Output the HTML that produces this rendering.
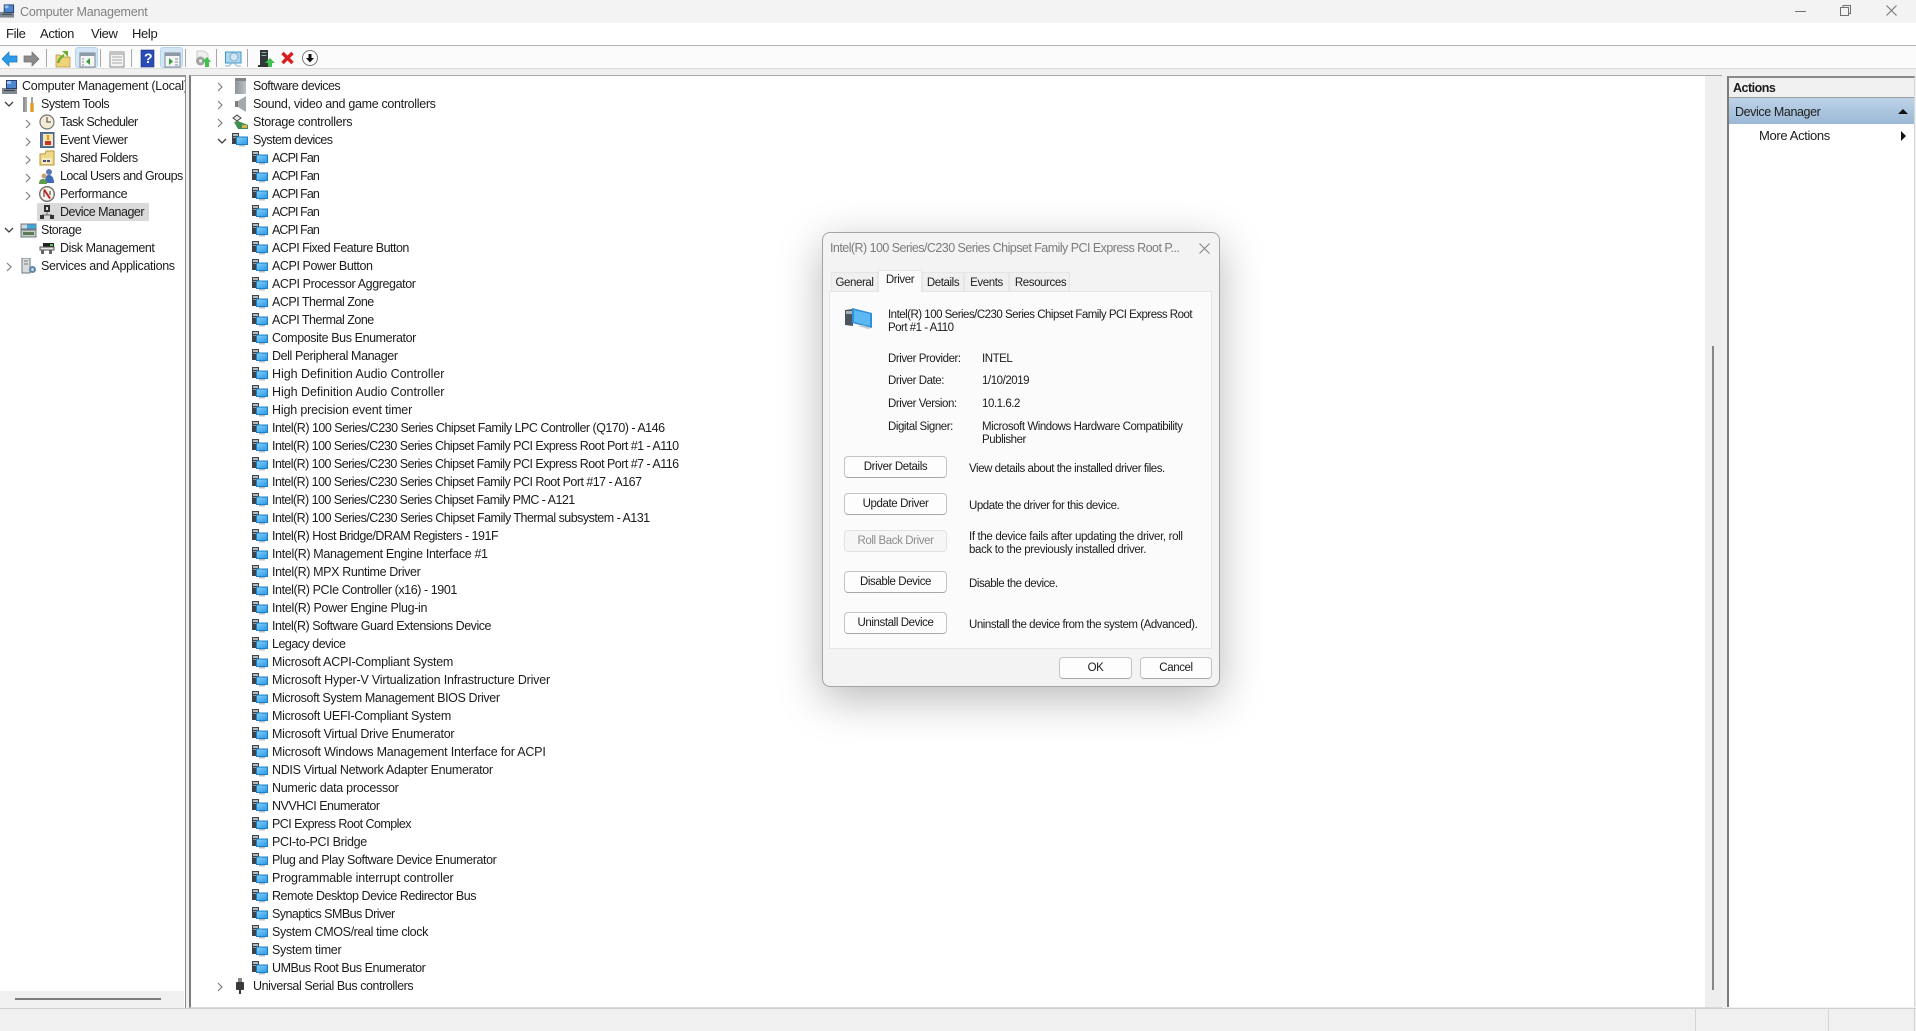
<!DOCTYPE html>
<html><head><meta charset="utf-8"><title>Computer Management</title>
<style>
*{box-sizing:border-box}
html,body{margin:0;padding:0;width:1916px;height:1031px;overflow:hidden;background:#f0f0f0;font-family:"Liberation Sans",sans-serif;font-size:12.5px;letter-spacing:-.5px;color:#1c1c1c}
.a{position:absolute}
.t{position:absolute;white-space:nowrap}
.m{font-size:13px;letter-spacing:-.35px}
.tree{position:absolute;top:77px;left:0}
.r{position:relative;height:18px;line-height:18px;white-space:nowrap}
.r svg{position:absolute;top:1px}
.r svg.c{top:5px}
.r span{position:absolute;top:0}
.l0 svg.c{left:216px}.l0 svg.i{left:232px}.l0 span{left:253px}
.l1 svg.i{left:252px}.l1 span{left:272px}
.sep{position:absolute;top:49px;width:1px;height:18px;background:#a8a8a8}
.b{position:absolute;left:844px;width:103px;height:22px;background:#fdfdfd;border:1px solid #c4c4c4;border-bottom-color:#a8a8a8;border-radius:4px;text-align:center;line-height:21px;font-size:11.5px;letter-spacing:-.4px;color:#1a1a1a}
.d{font-size:11.5px;letter-spacing:-.45px;line-height:13px}
.tab{position:absolute;top:272px;height:19px;background:#f0f0f0;border:1px solid #e6e6e6;border-bottom:0;text-align:center;line-height:20px;font-size:11.5px;letter-spacing:-.4px}
</style></head><body>
<svg width="0" height="0" style="position:absolute"><defs>
<linearGradient id="sc" x1="0" y1="0" x2="1" y2="1"><stop offset="0" stop-color="#7fd0f8"/><stop offset="1" stop-color="#2e9be6"/></linearGradient>
<linearGradient id="tw" x1="0" y1="0" x2="1" y2="0"><stop offset="0" stop-color="#8b949b"/><stop offset="1" stop-color="#b9c0c6"/></linearGradient>
<symbol id="pc" viewBox="0 0 16 16"><rect x="0" y="1" width="7" height="11" fill="#3d4349"/><rect x="1" y="2" width="5" height="2" fill="#b4bcc2"/><rect x="1" y="5" width="5" height="1" fill="#929aa1"/><path d="M4 4.500h12V13H4z" fill="#1c7fc6"/><path d="M5 5.500h10V12H5z" fill="url(#sc)"/><path d="M7 13h6v1.500H7z" fill="#b2bec6"/></symbol>
<symbol id="ch" viewBox="0 0 8 10"><path d="M2 1l4 4-4 4" fill="none" stroke="#808080" stroke-width="1.200"/></symbol>
<symbol id="dn" viewBox="0 0 10 8"><path d="M1 2l4 4 4-4" fill="none" stroke="#404040" stroke-width="1.300"/></symbol>
<symbol id="cm" viewBox="0 0 16 16"><rect x="0" y="9" width="15" height="6" fill="#7d8890"/><rect x="2" y="11" width="11" height="1" fill="#3a4248"/><rect x="4" y="1" width="11" height="9" fill="#243f70"/><rect x="5" y="2" width="9" height="7" fill="#4e86d0"/><rect x="5" y="2" width="4" height="3" fill="#9cc4ee"/></symbol>
</defs></svg>

<!-- Title bar -->
<div class="a" style="left:0;top:0;width:1916px;height:23px;background:#f3f3f3"></div>
<svg class="a" style="left:0;top:3px" width="15" height="16"><use href="#cm"/></svg>
<div class="t" style="left:20px;top:4px;line-height:16px;color:#808080;letter-spacing:-.2px">Computer Management</div>
<svg class="a" style="left:1790px;top:0" width="120" height="22" fill="none" stroke="#707070"><path d="M5 11.500h11"/><rect x="50.500" y="7.500" width="8" height="8"/><path d="M53 7.500V5.500h7.500v8h-2"/><path d="M96.500 5.500l10 10M106.500 5.500l-10 10"/></svg>

<!-- Menu -->
<div class="a" style="left:0;top:23px;width:1916px;height:23px;background:#fff;border-bottom:1px solid #b0b0b0"></div>
<div class="t m" style="left:6px;top:26px;line-height:16px">File</div>
<div class="t m" style="left:40px;top:26px;line-height:16px">Action</div>
<div class="t m" style="left:91px;top:26px;line-height:16px">View</div>
<div class="t m" style="left:132px;top:26px;line-height:16px">Help</div>

<!-- Toolbar -->
<div class="a" style="left:0;top:46px;width:1916px;height:23px;background:#fbfbfb;border-bottom:1px solid #dcdcdc"></div>
<div class="a" style="left:75px;top:47px;width:23px;height:21px;background:#d3e6f6;border:1px solid #b5d5ee;border-radius:3px"></div>
<div class="a" style="left:160px;top:47px;width:23px;height:21px;background:#d3e6f6;border:1px solid #b5d5ee;border-radius:3px"></div>
<i class="sep" style="left:46px"></i><i class="sep" style="left:100px"></i><i class="sep" style="left:131px"></i><i class="sep" style="left:185px"></i><i class="sep" style="left:216px"></i><i class="sep" style="left:247px"></i>
<svg class="a" style="left:0;top:46px" width="330" height="23" viewBox="0 0 330 23">
<path d="M2 13l7-7v4h8v6H9v4z" fill="#2d9be8" stroke="#2077bd" stroke-width=".7"/>
<path d="M39 13l-7-7v4h-8v6h8v4z" fill="#8c8c8c" stroke="#6e6e6e" stroke-width=".7"/>
<path d="M56 9h4l2 2h8v10H56z" fill="#eed27c" stroke="#b8923a" stroke-width=".7"/><path d="M58 17c1-4 3-6 6-8" fill="none" stroke="#6fb12e" stroke-width="2.400"/><path d="M62 5h6v6z" fill="#6fb12e"/>
<rect x="80" y="7" width="15" height="14" fill="#f4f6f8" stroke="#7d8791"/><rect x="80" y="7" width="15" height="3" fill="#8e9aa6"/><path d="M90 12v7l-4-3.500z" fill="#3e9c36"/><path d="M82 13h2M82 16h2M82 19h2" stroke="#808890"/>
<rect x="110" y="6" width="14" height="15" fill="#f4f4f4" stroke="#8a8a8a"/><path d="M112 11h10M112 14h10M112 17h10" stroke="#a8a8a8"/><rect x="110" y="6" width="14" height="3" fill="#c4c4c4"/>
<rect x="141" y="4" width="13" height="17" fill="#2a4cb8" stroke="#1a2f80" stroke-width=".6"/>
<rect x="165" y="7" width="15" height="14" fill="#f4f6f8" stroke="#7d8791"/><rect x="165" y="7" width="15" height="3" fill="#8e9aa6"/><path d="M169 12v7l4-3.500z" fill="#3e9c36"/><path d="M175 13h3M175 16h3M175 19h3" stroke="#808890"/>
<path d="M197 5h7l4 3v6h-11z" fill="#efefef" stroke="#bcbcbc" stroke-width=".7"/><circle cx="200.500" cy="15" r="4.500" fill="#a2a2a2"/><circle cx="200.500" cy="15" r="1.500" fill="#eee"/><path d="M205 21v-5h-3l5-5 4 5h-2v5z" fill="#3fc04f"/>
<rect x="225.500" y="6" width="15.500" height="11" fill="#a9d6f2" stroke="#3f97c8"/><path d="M232 17l-3 3h-4M234 17l3 3h4" fill="none" stroke="#8ab6cf"/><circle cx="234" cy="11" r="4" fill="#cfe7f6" stroke="#8aa9bc"/>
<rect x="260" y="4" width="8" height="15" fill="#30383a"/><path d="M261.500 6.500h5M261.500 9.500h5" stroke="#9aa"/><path d="M258 19h10v2h-10z" fill="#333"/><path d="M268 21v-4h-3l5-5 5 5h-3v4z" fill="#3fc04f"/>
<path d="M282.500 7l10 10M292.500 7l-10 10" stroke="#d81e1e" stroke-width="3.400"/>
<circle cx="310" cy="12" r="7.500" fill="#fff" stroke="#777"/><path d="M310 16.500l-4-4.500h2.500V8h3v4H314z" fill="#111"/>
</svg>
<div class="t" style="left:144px;top:50px;line-height:17px;font-size:14px;font-weight:700;color:#fff">?</div>

<!-- Left pane -->
<div class="a" style="left:0;top:75px;width:186px;height:934px;background:#fff;border-top:2px solid #9a9a9a;border-right:1px solid #8a8a8a;border-bottom:1px solid #b0b0b0"></div>
<div class="a" style="left:0;top:991px;width:184px;height:17px;background:#f0f0f0"></div>
<div class="a" style="left:15px;top:998px;width:146px;height:2px;background:#7d7d7d"></div>
<div class="a" style="left:37px;top:203px;width:112px;height:18px;background:#d9d9d9"></div>

<svg class="a" style="left:2px;top:79px" width="16" height="16"><use href="#cm"/></svg>
<svg class="a" style="left:21px;top:96px" width="16" height="17" viewBox="0 0 16 17"><path d="M4 1v15" stroke="#a8a8a8" stroke-width="4"/><path d="M3 1v15" stroke="#777" stroke-width="1"/><path d="M11 1v6" stroke="#8a8a8a" stroke-width="1.600"/><path d="M11 7v9" stroke="#dc9e1e" stroke-width="3.400"/></svg>
<svg class="a" style="left:39px;top:114px" width="16" height="16" viewBox="0 0 16 16"><circle cx="8" cy="8" r="7" fill="#f2ecd6" stroke="#777" stroke-width="1.200"/><path d="M8 3v5h4" fill="none" stroke="#444"/></svg>
<svg class="a" style="left:40px;top:132px" width="15" height="16" viewBox="0 0 15 16"><rect x="0" y="0" width="14" height="16" fill="#5a74a8" stroke="#46587c"/><rect x="3" y="2" width="10" height="12" fill="#f3e9b0"/><path d="M8 3v5" stroke="#e09a20" stroke-width="2.400"/><rect x="5" y="9" width="6" height="4" fill="#c33"/></svg>
<svg class="a" style="left:39px;top:150px" width="16" height="16" viewBox="0 0 16 16"><path d="M1 4h5l1-3h8v14H1z" fill="#eed98a" stroke="#b8923a"/><path d="M3 8h10v6H3z" fill="#f6ebc0"/><path d="M4 11h3M8 11h3" stroke="#336" stroke-width="1.800"/></svg>
<svg class="a" style="left:39px;top:168px" width="16" height="16" viewBox="0 0 16 16"><circle cx="10" cy="4" r="3" fill="#5d78b8"/><path d="M6 15c0-5 1-8 4-8s5 3 5 8z" fill="#3c6cb8"/><circle cx="5" cy="8" r="2.500" fill="#caa070"/><path d="M0 16c0-3 1-5 4-5s4 2 4 5z" fill="#5d9a4b"/></svg>
<svg class="a" style="left:39px;top:186px" width="16" height="16" viewBox="0 0 16 16"><circle cx="8" cy="8" r="7.300" fill="#f8f2ea" stroke="#6e6e6e" stroke-width="1.400"/><path d="M5 3.500l6 9" stroke="#c22" stroke-width="2"/><path d="M5 11V5M11 5v4" stroke="#333"/></svg>
<svg class="a" style="left:39px;top:204px" width="16" height="16" viewBox="0 0 16 16"><rect x="5" y="1" width="6" height="7" fill="#303030"/><rect x="7" y="3" width="2" height="3" fill="#ddd"/><path d="M8 8v3M3 11h10" stroke="#666"/><rect x="1" y="11" width="4" height="4" fill="#333"/><rect x="11" y="11" width="4" height="4" fill="#333"/></svg>
<svg class="a" style="left:20px;top:222px" width="17" height="16" viewBox="0 0 17 16"><path d="M1 2h15v5H1z" fill="#cfd6dc" stroke="#6c7780"/><rect x="7" y="2.500" width="9" height="4" fill="#3fa7dc"/><path d="M1 8h15v7H1z" fill="#c4cfc4" stroke="#6c7780"/><rect x="3" y="10" width="11" height="3" fill="#5d7a5a"/></svg>
<svg class="a" style="left:39px;top:240px" width="16" height="16" viewBox="0 0 16 16"><path d="M4 3h11v4H4z" fill="#222"/><rect x="11" y="4" width="3" height="2" fill="#5c5"/><path d="M1 7h14v3H1z" fill="#e8e8e8" stroke="#555"/><path d="M2 10h3v4H2zM10 10h3v4h-3z" fill="#666"/></svg>
<svg class="a" style="left:21px;top:258px" width="16" height="16" viewBox="0 0 16 16"><rect x="1" y="0" width="8" height="15" fill="#d8dcdf" stroke="#6f777e"/><path d="M3 3h4M3 6h4" stroke="#6f777e"/><circle cx="11.500" cy="11.500" r="3.500" fill="#5f89ad"/><circle cx="11.500" cy="11.500" r="1.300" fill="#e6eef4"/></svg>

<div class="t" style="left:22px;top:77px;line-height:18px;width:163px;overflow:hidden;letter-spacing:-.27px">Computer Management (Local)</div>
<div class="t" style="left:41px;top:95px;line-height:18px">System Tools</div>
<div class="t" style="left:60px;top:113px;line-height:18px;letter-spacing:-.56px">Task Scheduler</div>
<div class="t" style="left:60px;top:131px;line-height:18px">Event Viewer</div>
<div class="t" style="left:60px;top:149px;line-height:18px;letter-spacing:-.56px">Shared Folders</div>
<div class="t" style="left:60px;top:167px;line-height:18px;letter-spacing:-.55px">Local Users and Groups</div>
<div class="t" style="left:60px;top:185px;line-height:18px;letter-spacing:-.4px">Performance</div>
<div class="t" style="left:60px;top:203px;line-height:18px">Device Manager</div>
<div class="t" style="left:41px;top:221px;line-height:18px">Storage</div>
<div class="t" style="left:60px;top:239px;line-height:18px;letter-spacing:-.42px">Disk Management</div>
<div class="t" style="left:41px;top:257px;line-height:18px;letter-spacing:-.35px">Services and Applications</div>
<svg class="a" style="left:4px;top:100px" width="10" height="8"><use href="#dn"/></svg>
<svg class="a" style="left:4px;top:226px" width="10" height="8"><use href="#dn"/></svg>
<svg class="a" style="left:24px;top:119px" width="8" height="10"><use href="#ch"/></svg>
<svg class="a" style="left:24px;top:137px" width="8" height="10"><use href="#ch"/></svg>
<svg class="a" style="left:24px;top:155px" width="8" height="10"><use href="#ch"/></svg>
<svg class="a" style="left:24px;top:173px" width="8" height="10"><use href="#ch"/></svg>
<svg class="a" style="left:24px;top:191px" width="8" height="10"><use href="#ch"/></svg>
<svg class="a" style="left:5px;top:262px" width="8" height="10"><use href="#ch"/></svg>

<!-- Center pane -->
<div class="a" style="left:189px;top:75px;width:1533px;height:933px;background:#fff;border-top:1px solid #a8a8a8;border-left:2px solid #7c7c7c;border-bottom:1px solid #d8d8d8"></div>
<div class="a" style="left:1705px;top:76px;width:17px;height:931px;background:#eeeeee"></div>
<div class="a" style="left:1712px;top:346px;width:2px;height:644px;background:#868686"></div>

<div class="tree" style="width:800px">
<div class="r l0"><svg class="c" width="8" height="10"><use href="#ch"/></svg><svg class="i" style="left:235px" width="11" height="16" viewBox="0 0 11 16"><rect x="0" y="0" width="11" height="16" fill="url(#tw)"/><rect x="0" y="0" width="11" height="3" fill="#7d868d"/></svg><span>Software devices</span></div>
<div class="r l0"><svg class="c" width="8" height="10"><use href="#ch"/></svg><svg class="i" style="left:235px" width="11" height="16" viewBox="0 0 11 16"><path d="M0 5h3l8-5v16l-8-5H0z" fill="#a4a9ae"/><path d="M0 5h3v6H0z" fill="#777d82"/></svg><span style="letter-spacing:-.32px">Sound, video and game controllers</span></div>
<div class="r l0"><svg class="c" width="8" height="10"><use href="#ch"/></svg><svg class="i" width="16" height="16" viewBox="0 0 16 16"><path d="M1 4l4-3 4 3-4 3z" fill="#e4e8ea" stroke="#444"/><path d="M2 8l4-1 10 4v4H6z" fill="#3f8f52"/><rect x="10" y="11" width="5" height="3" fill="#d8b24a"/></svg><span style="letter-spacing:-.3px">Storage controllers</span></div>
<div class="r l0"><svg class="c" style="left:217px;top:6px" width="10" height="8"><use href="#dn"/></svg><svg class="i" width="16" height="16"><use href="#pc"/></svg><span style="letter-spacing:-.58px">System devices</span></div>
<div class="r l1"><svg class="i" width="16" height="16"><use href="#pc"/></svg><span style="letter-spacing:-.9px">ACPI Fan</span></div>
<div class="r l1"><svg class="i" width="16" height="16"><use href="#pc"/></svg><span style="letter-spacing:-.9px">ACPI Fan</span></div>
<div class="r l1"><svg class="i" width="16" height="16"><use href="#pc"/></svg><span style="letter-spacing:-.9px">ACPI Fan</span></div>
<div class="r l1"><svg class="i" width="16" height="16"><use href="#pc"/></svg><span style="letter-spacing:-.9px">ACPI Fan</span></div>
<div class="r l1"><svg class="i" width="16" height="16"><use href="#pc"/></svg><span style="letter-spacing:-.9px">ACPI Fan</span></div>
<div class="r l1"><svg class="i" width="16" height="16"><use href="#pc"/></svg><span>ACPI Fixed Feature Button</span></div>
<div class="r l1"><svg class="i" width="16" height="16"><use href="#pc"/></svg><span style="letter-spacing:-.42px">ACPI Power Button</span></div>
<div class="r l1"><svg class="i" width="16" height="16"><use href="#pc"/></svg><span style="letter-spacing:-.4px">ACPI Processor Aggregator</span></div>
<div class="r l1"><svg class="i" width="16" height="16"><use href="#pc"/></svg><span>ACPI Thermal Zone</span></div>
<div class="r l1"><svg class="i" width="16" height="16"><use href="#pc"/></svg><span>ACPI Thermal Zone</span></div>
<div class="r l1"><svg class="i" width="16" height="16"><use href="#pc"/></svg><span style="letter-spacing:-.4px">Composite Bus Enumerator</span></div>
<div class="r l1"><svg class="i" width="16" height="16"><use href="#pc"/></svg><span style="letter-spacing:-.4px">Dell Peripheral Manager</span></div>
<div class="r l1"><svg class="i" width="16" height="16"><use href="#pc"/></svg><span style="letter-spacing:-.04px">High Definition Audio Controller</span></div>
<div class="r l1"><svg class="i" width="16" height="16"><use href="#pc"/></svg><span style="letter-spacing:-.04px">High Definition Audio Controller</span></div>
<div class="r l1"><svg class="i" width="16" height="16"><use href="#pc"/></svg><span style="letter-spacing:-.17px">High precision event timer</span></div>
<div class="r l1"><svg class="i" width="16" height="16"><use href="#pc"/></svg><span>Intel(R) 100 Series/C230 Series Chipset Family LPC Controller (Q170) - A146</span></div>
<div class="r l1"><svg class="i" width="16" height="16"><use href="#pc"/></svg><span style="letter-spacing:-.53px">Intel(R) 100 Series/C230 Series Chipset Family PCI Express Root Port #1 - A110</span></div>
<div class="r l1"><svg class="i" width="16" height="16"><use href="#pc"/></svg><span style="letter-spacing:-.53px">Intel(R) 100 Series/C230 Series Chipset Family PCI Express Root Port #7 - A116</span></div>
<div class="r l1"><svg class="i" width="16" height="16"><use href="#pc"/></svg><span style="letter-spacing:-.53px">Intel(R) 100 Series/C230 Series Chipset Family PCI Root Port #17 - A167</span></div>
<div class="r l1"><svg class="i" width="16" height="16"><use href="#pc"/></svg><span style="letter-spacing:-.54px">Intel(R) 100 Series/C230 Series Chipset Family PMC - A121</span></div>
<div class="r l1"><svg class="i" width="16" height="16"><use href="#pc"/></svg><span style="letter-spacing:-.52px">Intel(R) 100 Series/C230 Series Chipset Family Thermal subsystem - A131</span></div>
<div class="r l1"><svg class="i" width="16" height="16"><use href="#pc"/></svg><span style="letter-spacing:-.47px">Intel(R) Host Bridge/DRAM Registers - 191F</span></div>
<div class="r l1"><svg class="i" width="16" height="16"><use href="#pc"/></svg><span style="letter-spacing:-.35px">Intel(R) Management Engine Interface #1</span></div>
<div class="r l1"><svg class="i" width="16" height="16"><use href="#pc"/></svg><span style="letter-spacing:-.37px">Intel(R) MPX Runtime Driver</span></div>
<div class="r l1"><svg class="i" width="16" height="16"><use href="#pc"/></svg><span style="letter-spacing:-.43px">Intel(R) PCIe Controller (x16) - 1901</span></div>
<div class="r l1"><svg class="i" width="16" height="16"><use href="#pc"/></svg><span style="letter-spacing:-.33px">Intel(R) Power Engine Plug-in</span></div>
<div class="r l1"><svg class="i" width="16" height="16"><use href="#pc"/></svg><span style="letter-spacing:-.47px">Intel(R) Software Guard Extensions Device</span></div>
<div class="r l1"><svg class="i" width="16" height="16"><use href="#pc"/></svg><span>Legacy device</span></div>
<div class="r l1"><svg class="i" width="16" height="16"><use href="#pc"/></svg><span style="letter-spacing:-.23px">Microsoft ACPI-Compliant System</span></div>
<div class="r l1"><svg class="i" width="16" height="16"><use href="#pc"/></svg><span style="letter-spacing:-.2px">Microsoft Hyper-V Virtualization Infrastructure Driver</span></div>
<div class="r l1"><svg class="i" width="16" height="16"><use href="#pc"/></svg><span style="letter-spacing:-.38px">Microsoft System Management BIOS Driver</span></div>
<div class="r l1"><svg class="i" width="16" height="16"><use href="#pc"/></svg><span style="letter-spacing:-.3px">Microsoft UEFI-Compliant System</span></div>
<div class="r l1"><svg class="i" width="16" height="16"><use href="#pc"/></svg><span style="letter-spacing:-.25px">Microsoft Virtual Drive Enumerator</span></div>
<div class="r l1"><svg class="i" width="16" height="16"><use href="#pc"/></svg><span style="letter-spacing:-.21px">Microsoft Windows Management Interface for ACPI</span></div>
<div class="r l1"><svg class="i" width="16" height="16"><use href="#pc"/></svg><span style="letter-spacing:-.32px">NDIS Virtual Network Adapter Enumerator</span></div>
<div class="r l1"><svg class="i" width="16" height="16"><use href="#pc"/></svg><span style="letter-spacing:-.28px">Numeric data processor</span></div>
<div class="r l1"><svg class="i" width="16" height="16"><use href="#pc"/></svg><span>NVVHCI Enumerator</span></div>
<div class="r l1"><svg class="i" width="16" height="16"><use href="#pc"/></svg><span style="letter-spacing:-.55px">PCI Express Root Complex</span></div>
<div class="r l1"><svg class="i" width="16" height="16"><use href="#pc"/></svg><span style="letter-spacing:-.3px">PCI-to-PCI Bridge</span></div>
<div class="r l1"><svg class="i" width="16" height="16"><use href="#pc"/></svg><span style="letter-spacing:-.4px">Plug and Play Software Device Enumerator</span></div>
<div class="r l1"><svg class="i" width="16" height="16"><use href="#pc"/></svg><span style="letter-spacing:-.14px">Programmable interrupt controller</span></div>
<div class="r l1"><svg class="i" width="16" height="16"><use href="#pc"/></svg><span style="letter-spacing:-.47px">Remote Desktop Device Redirector Bus</span></div>
<div class="r l1"><svg class="i" width="16" height="16"><use href="#pc"/></svg><span style="letter-spacing:-.55px">Synaptics SMBus Driver</span></div>
<div class="r l1"><svg class="i" width="16" height="16"><use href="#pc"/></svg><span style="letter-spacing:-.37px">System CMOS/real time clock</span></div>
<div class="r l1"><svg class="i" width="16" height="16"><use href="#pc"/></svg><span style="letter-spacing:-.3px">System timer</span></div>
<div class="r l1"><svg class="i" width="16" height="16"><use href="#pc"/></svg><span style="letter-spacing:-.45px">UMBus Root Bus Enumerator</span></div>
<div class="r l0"><svg class="c" width="8" height="10"><use href="#ch"/></svg><svg class="i" style="left:235px" width="10" height="16" viewBox="0 0 10 16"><rect x="3" y="0" width="4" height="4" fill="#888"/><rect x="1" y="4" width="8" height="8" rx="1" fill="#3a3a3a"/><rect x="4" y="12" width="2" height="4" fill="#3a3a3a"/></svg><span style="letter-spacing:-.42px">Universal Serial Bus controllers</span></div>
</div>

<!-- Actions pane -->
<div class="a" style="left:1727px;top:76px;width:188px;height:931px;background:#fff;border-top:2px solid #8a8a8a;border-left:2px solid #7c7c7c;border-right:1px solid #d8d8d8"></div>
<div class="a" style="left:1729px;top:78px;width:185px;height:20px;background:#f0f0f0;border-bottom:1px solid #a0a0a0"></div>
<div class="t" style="left:1733px;top:80px;line-height:16px;font-weight:700;font-size:12.5px">Actions</div>
<div class="a" style="left:1729px;top:98px;width:185px;height:26px;background:linear-gradient(#bdd3e8,#9cb8d6)"></div>
<div class="t" style="left:1735px;top:103px;line-height:18px;letter-spacing:-.4px">Device Manager</div>
<svg class="a" style="left:1897px;top:107px" width="12" height="8"><path d="M1 7l5-5 5 5z" fill="#111"/></svg>
<div class="t m" style="left:1759px;top:127px;line-height:18px">More Actions</div>
<svg class="a" style="left:1900px;top:130px" width="8" height="12"><path d="M1 1l5 5-5 5z" fill="#111"/></svg>

<!-- Status bar -->
<div class="a" style="left:0;top:1008px;width:1916px;height:23px;background:#f0f0f0;border-top:1px solid #cfcfcf"></div>
<div class="a" style="left:1695px;top:1009px;width:1px;height:22px;background:#d4d4d4"></div>
<div class="a" style="left:1828px;top:1009px;width:1px;height:22px;background:#d4d4d4"></div>
<div class="a" style="left:1914px;top:1009px;width:1px;height:22px;background:#d4d4d4"></div>

<!-- Dialog -->
<div class="a" style="left:822px;top:232px;width:398px;height:455px;background:#f3f3f3;border:1px solid #a4a4a4;border-radius:8px;box-shadow:0 12px 44px rgba(0,0,0,.28)"></div>
<div class="t" style="left:830px;top:240px;line-height:16px;color:#7c7c7c;letter-spacing:-.54px">Intel(R) 100 Series/C230 Series Chipset Family PCI Express Root P...</div>
<svg class="a" style="left:1199px;top:243px" width="11" height="11"><path d="M.5.500l10 10M10.500.500l-10 10" stroke="#808080" fill="none"/></svg>
<div class="a" style="left:829px;top:291px;width:383px;height:358px;background:#fbfbfb;border:1px solid #e6e6e6"></div>
<div class="tab" style="left:831px;width:47px">General</div>
<div class="tab" style="left:922px;width:42px">Details</div>
<div class="tab" style="left:964px;width:45px">Events</div>
<div class="tab" style="left:1009px;width:61px;padding-left:2px">Resources</div>
<div class="tab" style="left:878px;top:270px;width:44px;height:22px;background:#fbfbfb;line-height:19px">Driver</div>

<svg class="a" style="left:844px;top:306px" width="30" height="26" viewBox="0 0 30 26"><path d="M1 4l8-1v17l-8-1z" fill="#4a5560"/><path d="M2 5h6v3H2z" fill="#a8b2ba"/><path d="M8 2l20 5v15L8 17z" fill="#2f8fd8"/><path d="M10 4l16 4v12L10 16z" fill="#5cb8f2"/><path d="M14 20l10 3 4-1-10-3z" fill="#c4ccd2"/></svg>

<div class="t d" style="left:888px;top:309px;color:#1a1a1a;line-height:13px;letter-spacing:-.51px">Intel(R) 100 Series/C230 Series Chipset Family PCI Express Root<br>Port #1 - A110</div>
<div class="t d" style="left:888px;top:353px">Driver Provider:</div><div class="t d" style="left:982px;top:353px">INTEL</div>
<div class="t d" style="left:888px;top:375px">Driver Date:</div><div class="t d" style="left:982px;top:375px">1/10/2019</div>
<div class="t d" style="left:888px;top:398px">Driver Version:</div><div class="t d" style="left:982px;top:398px">10.1.6.2</div>
<div class="t d" style="left:888px;top:421px">Digital Signer:</div><div class="t d" style="left:982px;top:421px">Microsoft Windows Hardware Compatibility<br>Publisher</div>

<div class="b" style="top:456px">Driver Details</div>
<div class="b" style="top:493px">Update Driver</div>
<div class="b" style="top:530px;color:#8c8c8c;border-color:#e2e2e2;background:#f6f6f6">Roll Back Driver</div>
<div class="b" style="top:571px">Disable Device</div>
<div class="b" style="top:612px">Uninstall Device</div>
<div class="t d" style="left:969px;top:463px">View details about the installed driver files.</div>
<div class="t d" style="left:969px;top:500px">Update the driver for this device.</div>
<div class="t d" style="left:969px;top:531px;letter-spacing:-.35px">If the device fails after updating the driver, roll<br>back to the previously installed driver.</div>
<div class="t d" style="left:969px;top:578px">Disable the device.</div>
<div class="t d" style="left:969px;top:619px">Uninstall the device from the system (Advanced).</div>
<div class="b" style="left:1059px;top:657px;width:73px;height:22px">OK</div>
<div class="b" style="left:1140px;top:657px;width:72px;height:22px">Cancel</div>
</body></html>
